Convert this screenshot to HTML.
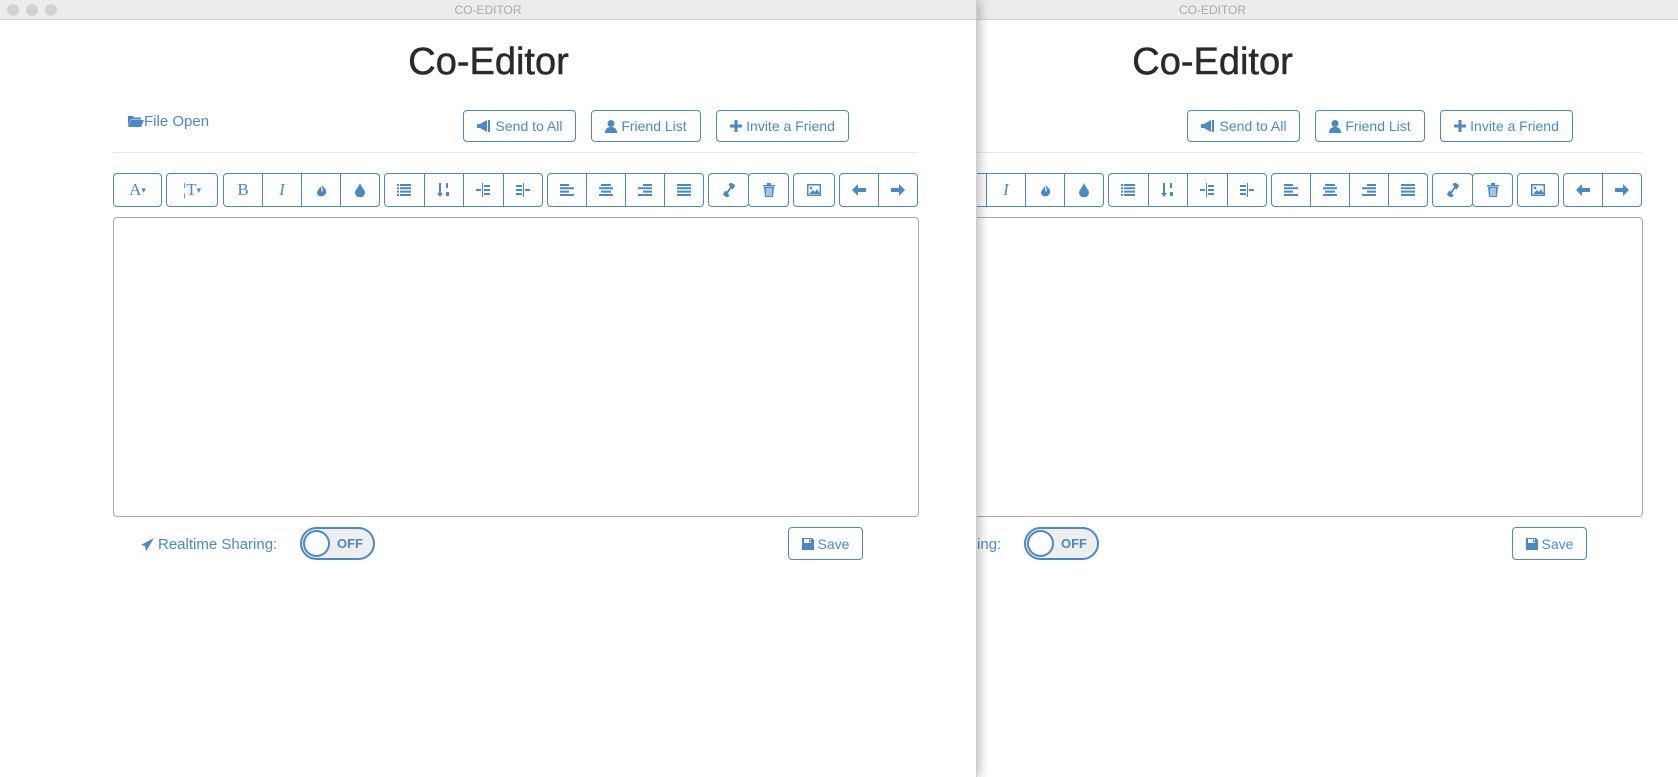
<!DOCTYPE html>
<html><head><meta charset="utf-8"><style>
*{box-sizing:border-box;margin:0;padding:0}
body{width:1678px;height:777px;overflow:hidden;background:#fff;position:relative;font-family:"Liberation Sans",sans-serif;color:#4a89c8}
.win{position:absolute;top:0;width:977px;height:777px;background:#fff;overflow:hidden}
.tb{position:absolute;left:0;top:0;width:100%;height:20px;background:#ececec;border-bottom:1px solid #d4d4d4;text-align:center;font-size:12px;line-height:20px;color:#a9a9a9}
.dot{position:absolute;top:4px;width:12px;height:12px;border-radius:50%;background:#d2d2d2}
h1{position:absolute;left:0;width:977px;top:41px;text-align:center;font-size:38px;font-weight:normal;color:#2a2a2a;-webkit-text-stroke:0.5px #2a2a2a}
.fo{position:absolute;left:128px;top:113px;font-size:15px}
.btn{position:absolute;border:1px solid #4a89c8;border-radius:4px;font-size:14px;display:flex;align-items:center;justify-content:center;gap:4px;background:#fff}
.hr{position:absolute;left:113px;top:152px;width:805px;height:1px;background:#e6e6e6}
.grp{position:absolute;top:173px;height:34px;display:flex;border:1px solid #4a89c8;border-radius:4px;overflow:hidden}
.grp>div{flex:1;display:flex;align-items:center;justify-content:center;border-left:1px solid #4a89c8;font-family:"Liberation Serif",serif;font-size:17px}
.grp>div:first-child{border-left:none}
.ed{position:absolute;left:113px;top:217px;width:806px;height:300px;border:1px solid #aaa;border-radius:4px}
.rs{position:absolute;left:141px;top:536px;font-size:15px;display:flex;align-items:center;gap:4px}
.tg{position:absolute;left:300px;top:527px;width:75px;height:33px;border:2px solid #4a89c8;border-radius:17px;background:#eee}
.tg .c{position:absolute;left:1px;top:1px;width:27px;height:27px;border-radius:50%;background:#fff;border:2px solid #4a89c8}
.tg span{position:absolute;left:35px;top:7px;font-size:13px;font-weight:bold}
svg{fill:#4a89c8}
</style></head><body>

<div class="win" id="w2" style="left:724px;width:977px">
<div class="tb">CO-EDITOR</div>
<div id="c2"></div>
</div>

<div class="win" id="w1" style="left:0;box-shadow:3px 0 10px rgba(0,0,0,0.25);border-right:1px solid #ccc">
<div class="tb"><span class="dot" style="left:7px"></span><span class="dot" style="left:26px"></span><span class="dot" style="left:45px"></span>CO-EDITOR</div>
<div id="c1">
<h1>Co-Editor</h1>
<div class="fo"><svg width="16" height="12" viewBox="0 0 16 12" style="vertical-align:-1px"><path d="M0 1h5l1 1.5h7v2H3L0 11z M3 5h13l-3 7H0z"/></svg>File Open</div>
<div class="btn" style="left:463px;top:110px;width:113px;height:32px"><svg width="15" height="12" viewBox="0 0 15 12"><path d="M0 4h3l7-4v12L3 8H0z M11 0h2v12h-2z"/></svg>Send to All</div>
<div class="btn" style="left:591px;top:110px;width:110px;height:32px"><svg width="12" height="13" viewBox="0 0 12 13"><circle cx="6" cy="3.5" r="3.5"/><path d="M0 13c0-4 2-6 6-6s6 2 6 6z"/></svg>Friend List</div>
<div class="btn" style="left:716px;top:110px;width:133px;height:32px"><svg width="12" height="12" viewBox="0 0 12 12"><path d="M4.5 0h3v4.5H12v3H7.5V12h-3V7.5H0v-3h4.5z"/></svg>Invite a Friend</div>
<div class="hr"></div>
<div class="grp" style="left:113px;width:49px"><div>A<span style="font-size:9px">▾</span></div></div>
<div class="grp" style="left:166px;width:52px"><div>¦T<span style="font-size:9px">▾</span></div></div>
<div class="grp" style="left:223px;width:157px"><div>B</div><div><i>I</i></div><div><svg width="11" height="14" viewBox="0 0 11 14"><path d="M5 0c1 4 6 5 5 10-1 4-8 5-9 0 0-3 3-4 3-7 2 2 1 5 2 6 1-1 1-3-1-9z"/></svg></div><div><svg width="10" height="14" viewBox="0 0 10 14"><path d="M5 0C3 5 0 7 0 9.5a5 5 0 0010 0C10 7 7 5 5 0z"/></svg></div></div>
<div class="grp" style="left:384px;width:159px"><div><svg width="14" height="12" viewBox="0 0 14 12"><path d="M0 0h2v2H0zM3 0h11v2H3zM0 3.3h2v2H0zM3 3.3h11v2H3zM0 6.6h2v2H0zM3 6.6h11v2H3zM0 10h2v2H0zM3 10h11v2H3z"/></svg></div><div><svg width="14" height="14" viewBox="0 0 14 14"><path d="M2 0h2v10h2l-3 4-3-4h2z M9 0h2v5H9z M9 9h3v4H9z"/></svg></div><div><svg width="14" height="14" viewBox="0 0 14 14"><path d="M6 0h1v14H6z M0 6h5v2H0z M8 2h6v2H8zM8 6h6v2H8zM8 10h6v2H8z"/></svg></div><div><svg width="14" height="14" viewBox="0 0 14 14"><path d="M7 0h1v14H7z M9 6h5v2H9z M0 2h6v2H0zM0 6h6v2H0zM0 10h6v2H0z"/></svg></div></div>
<div class="grp" style="left:547px;width:157px"><div><svg width="14" height="12" viewBox="0 0 14 12"><path d="M0 0h9v2H0zM0 3.3h14v2H0zM0 6.6h9v2H0zM0 10h14v2H0z"/></svg></div><div><svg width="14" height="12" viewBox="0 0 14 12"><path d="M2 0h10v2H2zM0 3.3h14v2H0zM2 6.6h10v2H2zM0 10h14v2H0z"/></svg></div><div><svg width="14" height="12" viewBox="0 0 14 12"><path d="M5 0h9v2H5zM0 3.3h14v2H0zM5 6.6h9v2H5zM0 10h14v2H0z"/></svg></div><div><svg width="14" height="12" viewBox="0 0 14 12"><path d="M0 0h14v2H0zM0 3.3h14v2H0zM0 6.6h14v2H0zM0 10h14v2H0z"/></svg></div></div>
<div class="grp" style="left:708px;width:41px"><div><svg width="12" height="14" viewBox="0 0 12 14" fill="none" stroke="#4a89c8" stroke-width="1.8"><path d="M6 2l2-1.5 3 2L9 6M6 12l-2 1.5-3-2L3 8M8 4L4 10"/></svg></div></div>
<div class="grp" style="left:748px;width:41px"><div><svg width="12" height="14" viewBox="0 0 12 14"><path d="M0 2h12v1.5H0zM4 0h4v2H4zM1 4h10l-1 10H2zM3.5 5v8h1V5zM5.5 5v8h1V5zM7.5 5v8h1V5z" fill-rule="evenodd"/></svg></div></div>
<div class="grp" style="left:793px;width:42px"><div><svg width="14" height="12" viewBox="0 0 14 12"><path d="M0 0h14v12H0zM1.5 1.5v9h11v-9z" fill-rule="evenodd"/><circle cx="4" cy="4" r="1.3"/><path d="M2 10l4-4 2 2 2-3 3 5z"/></svg></div></div>
<div class="grp" style="left:839px;width:79px"><div><svg width="14" height="12" viewBox="0 0 14 12"><path d="M0 6l6-6v4h8v4H6v4z"/></svg></div><div><svg width="14" height="12" viewBox="0 0 14 12"><path d="M14 6L8 0v4H0v4h8v4z"/></svg></div></div>
<div class="ed"></div>
<div class="rs"><svg width="13" height="13" viewBox="0 0 13 13"><path d="M13 0L0 7l4 1 1 5 2-3z"/></svg>Realtime Sharing:</div>
<div class="tg"><div class="c"></div><span>OFF</span></div>
<div class="btn" style="left:788px;top:527px;width:75px;height:33px"><svg width="12" height="12" viewBox="0 0 12 12"><path d="M0 0h10l2 2v10H0zM2 1v4h7V1z M7 1.5h1.5v3H7z" fill-rule="evenodd"/></svg>Save</div>
</div>
</div>

<script>
document.getElementById('c2').innerHTML=document.getElementById('c1').innerHTML;
</script>
</body></html>
